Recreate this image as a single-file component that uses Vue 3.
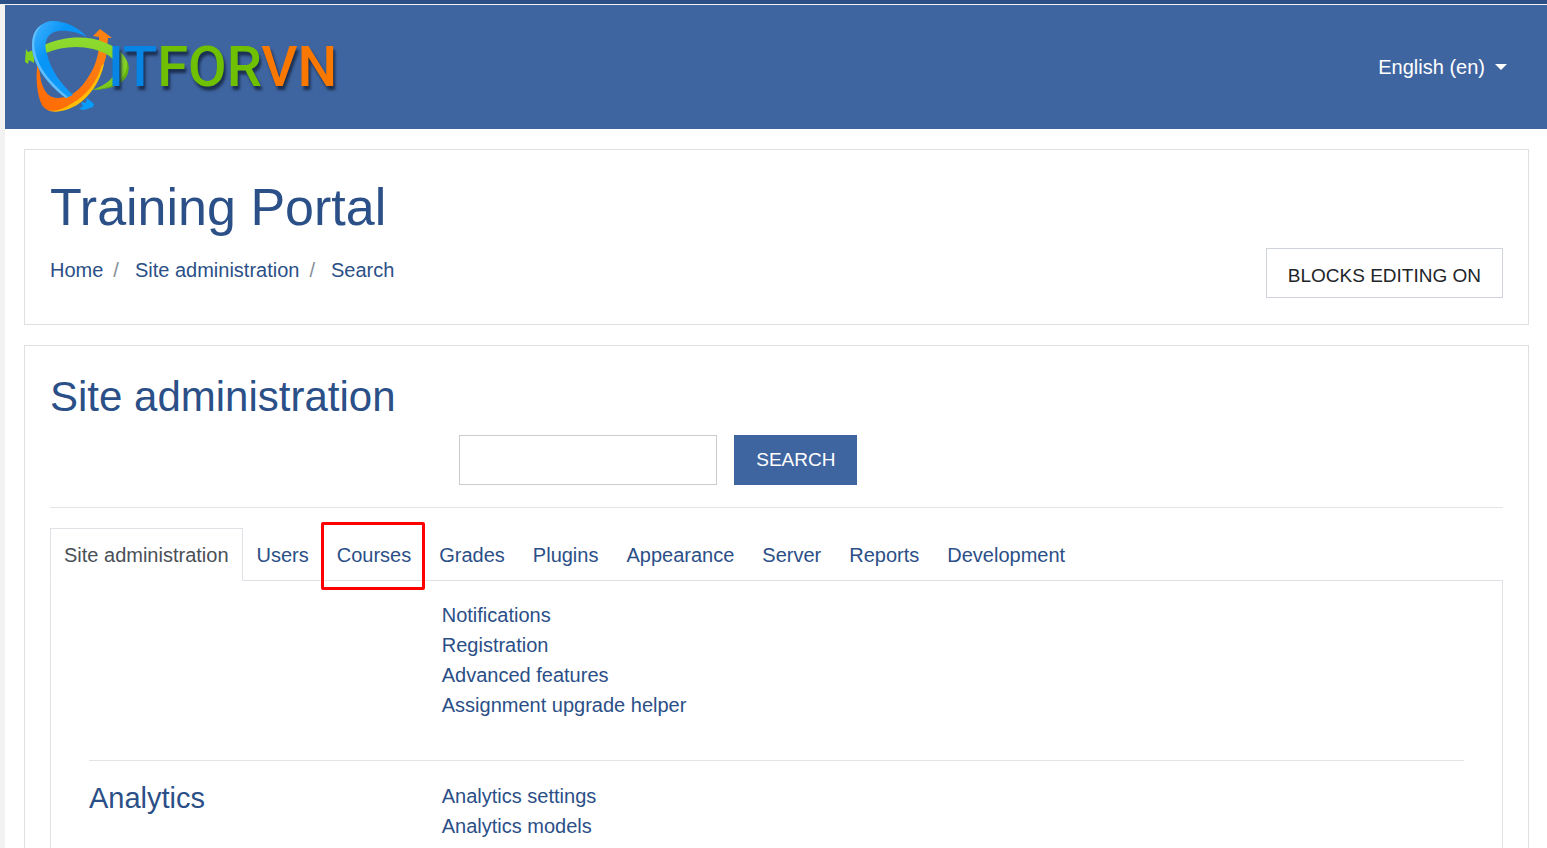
<script setup>
import { ref } from 'vue'

const query = ref('')
const crumbs = ['Home', 'Site administration', 'Search']
const tabs = ['Site administration', 'Users', 'Courses', 'Grades', 'Plugins', 'Appearance', 'Server', 'Reports', 'Development']
const sections = [
  { title: '', links: ['Notifications', 'Registration', 'Advanced features', 'Assignment upgrade helper'] },
  { title: 'Analytics', links: ['Analytics settings', 'Analytics models'] },
]
</script>

<template>
  <div class="shell">
    <div class="topbar"></div>
    <div class="page">
      <header class="header">
        <a href="#" class="brand" aria-label="ITFORVN">
          <svg class="emblem" viewBox="0 0 120 105" aria-hidden="true">
            <defs>
              <linearGradient id="blue" x1="0" y1="0" x2="1" y2="1">
                <stop offset="0" stop-color="#48b4ff" /><stop offset=".35" stop-color="#0795f6" /><stop offset="1" stop-color="#159cff" />
              </linearGradient>
              <linearGradient id="green" x1="0" y1="0" x2="0" y2="1">
                <stop offset="0" stop-color="#8fdc30" /><stop offset="1" stop-color="#79c718" />
              </linearGradient>
              <linearGradient id="orange" x1="0" y1="1" x2="1" y2="0">
                <stop offset="0" stop-color="#ff6a05" /><stop offset="1" stop-color="#ff8414" />
              </linearGradient>
            </defs>
            <path fill="#7fd01f" d="M6 34 8 37 14 35 14 48 9 45 8 49 5 47Z" />
            <path fill="url(#orange)" d="M18 46C15 62 17 80 22 90C27 98 37 98 50 92C67 84 80 64 86 42L88 23 92 23 80 14 73 21 79 22C80 34 77 49 69 61C61 74 51 83 38 83C29 83 24 77 21 66Z" />
            <path fill="#ffbd05" d="M82 50C77 67 66 81 51 89C43 94 36 97 28 95C36 99 48 95 57 90C69 82 80 68 84 49Z" />
            <path fill="url(#green)" d="M24 30C44 21 68 20 86 28C103 35 110 46 108 57C105 68 89 74 72 75C84 71 97 63 96 51C95 42 84 37 73 34C57 30 40 32 26 38Z" />
            <path fill="#61af10" d="M107 46C108 57 103 66 91 71C86 73 78 75 72 75C92 75 106 68 108 57C109 53 109 49 107 46Z" />
            <path fill="url(#blue)" d="M67 22C59 12 43 5 30 6C17 9 12 19 12 31C12 49 28 70 46 83L53 80C42 70 31 56 27 39C23 27 27 18 38 16C49 15 60 18 67 22Z" />
            <path fill="#62bdfc" d="M12 31C12 49 28 70 46 83L48 82C31 68 18 53 15 36C13 27 15 17 22 10C14 14 12 22 12 31Z" />
            <path fill="#079cf9" d="M59 94 63 91 61 87 66 88 67 83 74 89 73 92 64 95Z" />
          </svg>
          <span class="wordmark"><span class="sky">IT</span><span class="leaf">FOR</span><span class="amber">VN</span></span>
        </a>
        <button class="language" type="button">English (en)<span class="caret"></span></button>
      </header>

      <main class="content">
        <section class="card">
          <h1>Training Portal</h1>
          <div class="title-row">
            <nav aria-label="Breadcrumb">
              <ol class="crumbs">
                <li v-for="crumb in crumbs" :key="crumb"><a href="#">{{ crumb }}</a></li>
              </ol>
            </nav>
            <button class="btn outline" type="button">BLOCKS EDITING ON</button>
          </div>
        </section>

        <section class="card">
          <h2>Site administration</h2>
          <form class="search" @submit.prevent>
            <input v-model="query" type="text" aria-label="Search" />
            <button class="btn primary" type="submit">SEARCH</button>
          </form>
          <hr />
          <nav class="tabs" aria-label="Administration sections">
            <a v-for="(tab, i) in tabs" :key="tab" href="#" class="tab" :class="{ active: i === 0, marked: tab === 'Courses' }">{{ tab }}</a>
          </nav>
          <div class="panel">
            <div v-for="section in sections" :key="section.title" class="group">
              <div><h3 v-if="section.title"><a href="#">{{ section.title }}</a></h3></div>
              <ul>
                <li v-for="link in section.links" :key="link"><a href="#">{{ link }}</a></li>
              </ul>
            </div>
          </div>
        </section>
      </main>
    </div>
  </div>
</template>

<style>
body {
  margin: 0;
  background: #fff;
}
html {
  overflow: hidden;
}
</style>

<style scoped>
* {
  box-sizing: border-box;
}
.shell {
  height: 100vh;
  overflow: hidden;
  background: #f2f2f2;
  font: 20px/30px "Liberation Sans", Arial, sans-serif;
  color: #2b4f87;
}
.topbar {
  height: 4px;
  background: #2b4f87;
}
.page {
  margin: 1px 0 0 5px;
  min-height: 100vh;
  background: #fff;
}
a {
  color: inherit;
  text-decoration: none;
}
button,
input {
  font: inherit;
  border-radius: 0;
}
h1,
h2,
h3 {
  margin: 0;
  font-weight: 400;
}
ul,
ol {
  margin: 0;
  padding: 0;
  list-style: none;
}
.header {
  display: flex;
  align-items: center;
  justify-content: space-between;
  height: 124px;
  padding: 0 40px 0 15px;
  background: #3f65a0;
}
.brand {
  display: flex;
  align-items: center;
}
.emblem {
  width: 120px;
  height: 105px;
}
.wordmark {
  margin-left: -32px;
  font: 500 56px/76px "Liberation Sans Narrow", Roboto, sans-serif;
  text-shadow: 2px 4px 3px #1b2f50;
}
.sky {
  color: #0785e5;
}
.leaf {
  color: #6fc000;
}
.amber {
  color: #fb7800;
}
.language {
  display: flex;
  align-items: center;
  gap: 10px;
  padding: 0;
  border: 0;
  background: none;
  color: #fff;
}
.caret {
  border: 6px solid transparent;
  border-top-color: #fff;
  border-bottom: 0;
}
.content {
  display: grid;
  gap: 20px;
  padding: 20px 18px 20px 19px;
}
.card {
  padding: 25px 25px 26px;
  border: 1px solid #dee0e2;
}
h1 {
  font-size: 52px;
  line-height: 64px;
}
h2 {
  font-size: 42px;
  line-height: 52px;
}
h3 {
  font-size: 29px;
  line-height: 34px;
}
.title-row {
  display: flex;
  justify-content: space-between;
  margin-top: 9px;
}
.crumbs {
  display: flex;
  padding-top: 7px;
}
.crumbs li + li::before {
  content: "/";
  padding: 0 16px 0 10px;
  color: #868e96;
}
.btn {
  height: 50px;
  padding: 0 21px;
  border: 1px solid #ced4da;
  font-size: 19px;
}
.outline {
  padding-top: 6px;
  background: #fff;
  color: #212529;
}
.primary {
  border-color: #3f65a0;
  background: #3f65a0;
  color: #fff;
}
.search {
  display: flex;
  gap: 17px;
  margin-top: 12px;
  padding-left: calc(25% + 46px);
}
.search input {
  width: 258px;
  height: 50px;
  padding: 0 14px;
  border: 1px solid #ccc;
}
hr {
  margin: 22px 0 20px;
  border: 0;
  border-top: 1px solid #e4e4e5;
}
.tabs {
  display: flex;
}
.tab {
  position: relative;
  margin-bottom: -1px;
  padding: 11px 13px 10px;
  border: 1px solid transparent;
}
.active {
  border-color: #dee2e6;
  border-bottom-color: #fff;
  background: #fff;
  color: #495057;
}
.marked::after {
  content: "";
  position: absolute;
  inset: -7px -1px -10px -3px;
  border: 3px solid #f00;
  border-radius: 2px;
}
.panel {
  padding: 19px 38px;
  border: 1px solid #dee2e6;
}
.group {
  display: grid;
  grid-template-columns: 1fr 3fr;
  gap: 12px;
}
.group + .group {
  margin-top: 40px;
  padding-top: 20px;
  border-top: 1px solid #e4e4e5;
}
</style>
